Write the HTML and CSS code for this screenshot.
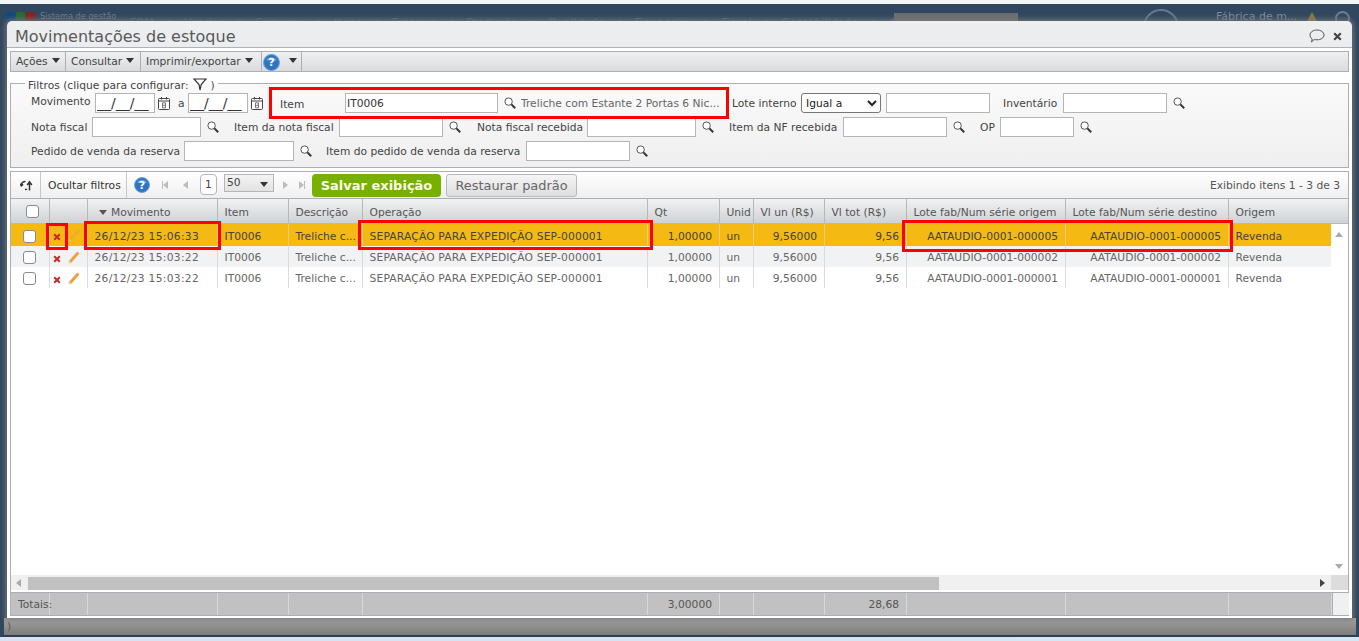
FILE: index.html
```html
<!DOCTYPE html>
<html lang="pt-BR">
<head>
<meta charset="utf-8">
<title>Movimentações de estoque</title>
<link rel="stylesheet" href="styles.css">
</head>
<body>
<svg class="defs" width="0" height="0" aria-hidden="true">
  <symbol id="lens" viewBox="0 0 12 12"><circle cx="4.6" cy="4.6" r="3.7" fill="#fff" stroke="#555" stroke-width="1"/><path d="M7.400 7.400l3.800 3.800" stroke="#333" stroke-width="2"/></symbol>
  <symbol id="cal" viewBox="0 0 12 14"><rect x=".5" y="2.500" width="11" height="11" rx="1" fill="#fff" stroke="#444"/><path d="M.5 5h11M3.500 1v2.500M8.500 1v2.500" stroke="#444"/><path d="M4.500 6.800h3v5h-3zM4.500 9.300h3" fill="none" stroke="#555" stroke-width=".8"/></symbol>
  <symbol id="help" viewBox="0 0 16 16"><circle cx="8" cy="8" r="7.500" fill="#2f74c0"/><circle cx="8" cy="8" r="7.500" fill="none" stroke="#6fa3d8"/><path d="M3 6a5.500 5 0 0 1 10 0z" fill="#6fa6dd"/></symbol>
  <symbol id="del" viewBox="0 0 8 8"><path d="M1.200 1.200l5.600 5.600M6.800 1.200L1.200 6.800" stroke="#c62a2a" stroke-width="2"/></symbol>
  <symbol id="pen" viewBox="0 0 12 13"><path d="M1.500 11.400L10.400 1.400" stroke="#ee9f45" stroke-width="3"/><path d="M.3 12.800l.7-3.200 2.300 2z" fill="#f6d9ad"/></symbol>
</svg>

<div class="desktop">
  <header class="appbar">
    <span class="dots"><i class="dot d1"></i><i class="dot d2"></i><i class="dot d3"></i></span>
    <span class="appname">Sistema de gestão</span>
    <span class="appnav">CRM ▾ Vendas ▾ Compras ▾ Itens ▾ Estoque ▾ Produção ▾ Qualidade ▾ Financeiro ▾ Fiscal ▾ Contabilidade ▾ ✱ ▾ ◯ ▾</span>
    <span class="appsearch"></span>
    <span class="applogo"></span>
    <span class="company">Fábrica de m...</span>
    <span class="bell"></span>
    <span class="power"></span>
  </header>
  <div class="desk-fill"></div>
  <div class="statusline"><span class="paren">)</span></div>
  <div class="taskstrip"></div>

  <section class="window">
    <div class="titlebar">
      <h1>Movimentações de estoque</h1>
      <span class="title-icons">
        <svg class="chat" viewBox="0 0 16 14" width="16" height="14"><path d="M8 1c3.800 0 7 2.100 7 5s-3.200 4.800-7 4.800c-1 0-1.800-.1-2.600-.4L2.500 13l.7-3C1.800 9 1 7.700 1 6c0-2.900 3.200-5 7-5z" fill="none" stroke="#555"/></svg>
        <svg class="close" viewBox="0 0 9 9" width="9" height="9"><path d="M1.200 1.200l6.600 6.600M7.800 1.200L1.200 7.800" stroke="#444" stroke-width="2.200"/></svg>
      </span>
    </div>
    <div class="winbody">
      <nav class="menubar">
        <span class="menu w-acoes">Ações <i class="caret"></i></span>
        <span class="menu w-consultar">Consultar <i class="caret"></i></span>
        <span class="menu w-imprimir">Imprimir/exportar <i class="caret"></i></span>
        <span class="menu w-help"><span class="helpicon big"><svg width="17" height="17"><use href="#help"/></svg><b>?</b></span><i class="caret"></i></span>
      </nav>

      <fieldset class="filters">
        <legend>Filtros (clique para configurar: <svg class="funnel" viewBox="0 0 14 13" width="14" height="13"><path d="M1 1h12L8.200 6.500 7 12 6 6.500z" fill="#fff" stroke="#333" stroke-width="1.200"/></svg> )</legend>
        <div class="frow r1">
          <label class="l-mov">Movimento</label><input class="in date" value="__/__/__">
          <svg class="calicon c1" width="12" height="14"><use href="#cal"/></svg>
          <label class="l-a">a</label><input class="in date" value="__/__/__">
          <svg class="calicon" width="12" height="14"><use href="#cal"/></svg>
          <label class="l-item">Item</label><input class="in i-item" value="IT0006">
          <svg class="lens" width="12" height="12"><use href="#lens"/></svg>
          <span class="itemdesc">Treliche com Estante 2 Portas 6 Nic...</span>
          <label class="l-lote">Lote interno</label>
          <select class="sel"><option>Igual a</option></select>
          <input class="in i-lote">
          <label class="l-inv">Inventário</label><input class="in i-104">
          <svg class="lens" width="12" height="12"><use href="#lens"/></svg>
        </div>
        <div class="frow r2">
          <label class="l-nf">Nota fiscal</label><input class="in i-109">
          <svg class="lens" width="12" height="12"><use href="#lens"/></svg>
          <label class="l-inf">Item da nota fiscal</label><input class="in i-104">
          <svg class="lens" width="12" height="12"><use href="#lens"/></svg>
          <label class="l-nfr">Nota fiscal recebida</label><input class="in i-109">
          <svg class="lens" width="12" height="12"><use href="#lens"/></svg>
          <label class="l-inr">Item da NF recebida</label><input class="in i-104">
          <svg class="lens" width="12" height="12"><use href="#lens"/></svg>
          <label class="l-op">OP</label><input class="in i-74">
          <svg class="lens" width="12" height="12"><use href="#lens"/></svg>
        </div>
        <div class="frow r3">
          <label class="l-ped">Pedido de venda da reserva</label><input class="in i-110">
          <svg class="lens" width="12" height="12"><use href="#lens"/></svg>
          <label class="l-ipd">Item do pedido de venda da reserva</label><input class="in i-104">
          <svg class="lens" width="12" height="12"><use href="#lens"/></svg>
        </div>
      </fieldset>

      <section class="gridpanel">
        <div class="gridbar">
          <span class="gb-cell gb-refresh"><svg viewBox="0 0 14 11" width="14" height="11"><path d="M1.200 5.500C1.500 2.800 3 1.500 5.500 1.500M.1 3.800l1.200 2 1.800-1.500M5 9.500c1 0 1.500 0 2-.3M9.500 10.500V2.500M7.200 5l2.300-3.300L11.800 5" fill="none" stroke="#333" stroke-width="1.500"/></svg></span>
          <span class="gb-cell gb-hide">Ocultar filtros</span>
          <span class="helpicon gb-help"><svg width="16" height="16"><use href="#help"/></svg><b>?</b></span>
          <span class="pager"><i class="pg first"></i><i class="pg prev"></i></span>
          <span class="pagenum">1</span>
          <span class="pagesize">50<i class="caret dark"></i></span>
          <span class="pager pager2"><i class="pg next"></i><i class="pg last"></i></span>
          <button class="btn-save">Salvar exibição</button>
          <button class="btn-reset">Restaurar padrão</button>
          <span class="showing">Exibindo itens 1 - 3 de 3</span>
        </div>

        <div class="gridmain">
          <div class="gtable">
            <div class="ghead">
              <div class="c chk"><span class="cb head-cb"></span></div>
              <div class="c"></div>
              <div class="c sorted"><i class="caret sort"></i>Movimento</div>
              <div class="c">Item</div>
              <div class="c">Descrição</div>
              <div class="c">Operação</div>
              <div class="c">Qt</div>
              <div class="c">Unid</div>
              <div class="c">Vl un (R$)</div>
              <div class="c">Vl tot (R$)</div>
              <div class="c">Lote fab/Num série origem</div>
              <div class="c">Lote fab/Num série destino</div>
              <div class="c">Origem</div>
            </div>
            <div class="grow sel-row">
              <div class="c chk"><span class="cb"></span></div>
              <div class="c ico"><svg width="8" height="8"><use href="#del"/></svg><svg class="pen" width="12" height="13"><use href="#pen"/></svg></div>
              <div class="c dt">26/12/23 15:06:33</div><div class="c">IT0006</div><div class="c">Treliche c...</div>
              <div class="c op">SEPARAÇÃO PARA EXPEDIÇÃO SEP-000001</div>
              <div class="c r">1,00000</div><div class="c">un</div><div class="c r">9,56000</div><div class="c r">9,56</div>
              <div class="c r">AATAUDIO-0001-000005</div><div class="c r">AATAUDIO-0001-000005</div><div class="c">Revenda</div>
            </div>
            <div class="grow alt">
              <div class="c chk"><span class="cb"></span></div>
              <div class="c ico"><svg width="8" height="8"><use href="#del"/></svg><svg class="pen" width="12" height="13"><use href="#pen"/></svg></div>
              <div class="c dt">26/12/23 15:03:22</div><div class="c">IT0006</div><div class="c">Treliche c...</div>
              <div class="c op">SEPARAÇÃO PARA EXPEDIÇÃO SEP-000001</div>
              <div class="c r">1,00000</div><div class="c">un</div><div class="c r">9,56000</div><div class="c r">9,56</div>
              <div class="c r">AATAUDIO-0001-000002</div><div class="c r">AATAUDIO-0001-000002</div><div class="c">Revenda</div>
            </div>
            <div class="grow">
              <div class="c chk"><span class="cb"></span></div>
              <div class="c ico"><svg width="8" height="8"><use href="#del"/></svg><svg class="pen" width="12" height="13"><use href="#pen"/></svg></div>
              <div class="c dt">26/12/23 15:03:22</div><div class="c">IT0006</div><div class="c">Treliche c...</div>
              <div class="c op">SEPARAÇÃO PARA EXPEDIÇÃO SEP-000001</div>
              <div class="c r">1,00000</div><div class="c">un</div><div class="c r">9,56000</div><div class="c r">9,56</div>
              <div class="c r">AATAUDIO-0001-000001</div><div class="c r">AATAUDIO-0001-000001</div><div class="c">Revenda</div>
            </div>
            <div class="gblank"></div>
            <div class="hscroll"><i class="arr left"></i><span class="hthumb"></span><i class="arr right"></i></div>
          </div>
          <div class="vscroll"><div class="vhead"></div><i class="arr up"></i><i class="arr down"></i><div class="vcorner"></div></div>
        </div>

        <div class="gtotals">
          <div class="c">Totais:</div><div class="c"></div><div class="c"></div><div class="c"></div><div class="c"></div><div class="c"></div>
          <div class="c r">3,00000</div><div class="c"></div><div class="c"></div><div class="c r">28,68</div><div class="c"></div><div class="c"></div><div class="c"></div><div class="tcorner"></div>
        </div>
      </section>
    </div>
  </section>

  <i class="mark m-item"></i>
  <i class="mark m-x"></i>
  <i class="mark m-mov"></i>
  <i class="mark m-op"></i>
  <i class="mark m-lote"></i>
</div>
</body>
</html>
```
FILE: styles.css
```css
* { box-sizing: border-box; }
html, body { margin: 0; height: 641px; overflow: hidden; }
body { font-family: "DejaVu Sans", sans-serif; font-size: 10.7px; color: #444; background: #fff; }
.defs { position: absolute; }
.desktop { position: relative; width: 1359px; height: 641px; display: flex; flex-direction: column; padding-top: 4px; background: #f4f5f5; overflow: hidden; }

.appbar { height: 18px; background: #30475f; display: flex; align-items: flex-start; padding-left: 6px; flex: none; color: #6c7a89; white-space: nowrap; }
.dots { display: flex; gap: 1px; width: 29px; flex: none; }
.dot { width: 9px; height: 8px; border-radius: 2px; display: block; margin-top: 8px; }
.d1 { background: #0f4a80; } .d2 { background: #2a6a30; } .d3 { background: #8c2020; }
.appname { margin: 7px 0 0 5px; width: 75px; flex: none; font-size: 8.2px; }
.appnav { margin: 12px 0 0 14px; width: 765px; flex: none; font-size: 11px; color: #4f6073; word-spacing: 9px; }
.appsearch { width: 124px; height: 10px; background: #6b6d70; margin-top: 9px; flex: none; }
.applogo { width: 36px; height: 36px; border: 2px solid #66788a; border-radius: 50%; margin: 5px 0 0 125px; flex: none; }
.company { margin: 6px 0 0 37px; width: 79px; flex: none; font-size: 11px; color: #7d8a98; }
.bell { width: 0; height: 0; border: 5px solid transparent; border-bottom: 9px solid #8a7a3a; margin: 3px 0 0 12px; flex: none; }
.power { width: 15px; height: 15px; border: 2px solid #6f7d8c; border-radius: 50%; margin: 7px 0 0 18px; flex: none; }
.desk-fill { flex: 1; background: #30475f; }
.statusline { flex: none; height: 19px; background: linear-gradient(#a3a3a3, #7c7c7c); border-left: 4px solid #30475f; border-right: 3px solid #30475f; border-bottom: 2px solid #303f4f; }
.taskstrip { height: 4px; flex: none; background: linear-gradient(90deg, #d9e2f0, #d3e8f2); }
.paren { font-size: 11px; color: #6a5a3a; margin-left: 3px; line-height: 12px; padding-top: 3px; display: block; }

.window { position: absolute; left: 7px; top: 21px; width: 1345px; height: 597px; border-radius: 5px 5px 0 0; background: linear-gradient(#eceef0, #cfd2d5); display: flex; flex-direction: column; box-shadow: 0 0 5px 2px rgba(120,120,120,.85); }
.titlebar { height: 26px; flex: none; display: flex; align-items: center; justify-content: space-between; padding: 4px 10px 0 8px; }
.titlebar h1 { margin: 0; font-weight: 400; font-size: 16px; color: #5a5a5a; }
.title-icons { display: flex; align-items: center; gap: 8px; }
.winbody { flex: 1; background: #fff; padding: 3px 3px 2px; display: flex; flex-direction: column; border-top: 1px solid #aeb2b6; min-height: 0; }

.menubar { height: 21px; flex: none; display: flex; background: linear-gradient(#eef0f1, #d9dbdd); border: 1px solid #aab0b5; }
.menu { display: flex; align-items: center; padding-left: 5px; border-right: 1px solid #aab0b5; white-space: nowrap; }
.w-acoes { width: 55px; } .w-consultar { width: 75px; } .w-imprimir { width: 121px; } .w-help { width: 40px; padding-left: 1px; gap: 5px; }
.caret { display: inline-block; width: 0; height: 0; border: 4px solid transparent; border-top: 5px solid #333; border-bottom: 0; margin-left: 4px; margin-top: -3px; }

.helpicon { position: relative; display: inline-flex; width: 17px; height: 17px; align-items: center; justify-content: center; flex: none; }
.helpicon svg { position: absolute; left: 0; top: 0; }
.helpicon b { position: relative; color: #fff; font-size: 11px; line-height: 1; }
.w-help .helpicon { margin-top: 2px; }

.filters { margin: 6px 0 0; padding: 0 0 0 20px; height: 90px; flex: none; border: 1px solid #aab0b5; background: linear-gradient(#fafafa, #efefef); min-width: 0; }
.filters legend { margin-left: -6px; padding: 0 3px; line-height: 11px; height: 11px; white-space: nowrap; }
.funnel { vertical-align: -2px; margin-left: 1px; }
.frow { display: flex; align-items: center; height: 20px; white-space: nowrap; }
.r1 { margin-top: 4px; }
.r2, .r3 { margin-top: 4px; }
.frow label { flex: none; }
.in { height: 20px; border: 1px solid #b5b5b5; background: #fff; font: 10.7px/17px "DejaVu Sans", sans-serif; color: #333; padding: 0 1px; flex: none; outline: 0; }
.in.date { width: 60px; font-size: 14px; line-height: 18px; padding: 0 1px; }
.i-item { width: 153px; }
.i-lote, .i-104 { width: 104px; }
.i-109 { width: 109px; }
.i-110 { width: 110px; }
.i-74 { width: 74px; }
.calicon { margin: 0 17px 0 3px; flex: none; }
.c1 { margin-right: 8px; }
.lens { margin-left: 6px; flex: none; }
.l-mov { width: 64px; margin-top: -3px; }
.l-a { width: 10px; }
.l-item { width: 65px; margin-top: 3px; }
.itemdesc { width: 199px; margin-left: 5px; overflow: hidden; color: #666; }
.l-lote { width: 69px; margin-left: 12px; }
.sel { width: 80px; height: 20px; font: 10.7px "DejaVu Sans", sans-serif; background: #fff; border: 1px solid #777; border-radius: 3px; color: #222; flex: none; padding: 0; }
.i-lote { margin-left: 5px; }
.l-inv { width: 60px; margin-left: 13px; }
.l-nf { width: 61px; }
.l-inf { width: 105px; margin-left: 15px; }
.l-nfr { width: 110px; margin-left: 16px; }
.l-inr { width: 114px; margin-left: 15px; }
.l-op { width: 20px; margin-left: 15px; }
.l-ped { width: 153px; }
.l-ipd { width: 200px; margin-left: 14px; }

.gridpanel { flex: 1; display: flex; flex-direction: column; margin-top: 3px; border: 1px solid #aab0b5; border-bottom: 0; min-height: 0; }
.gridbar { height: 27px; flex: none; display: flex; align-items: center; background: linear-gradient(#fff, #efefef); border-bottom: 1px solid #aab0b5; }
.gb-cell { height: 26px; display: flex; align-items: center; border-right: 1px solid #c6c9cc; flex: none; }
.gb-refresh { width: 30px; justify-content: center; padding-left: 2px; }
.gb-hide { width: 86px; padding-left: 7px; color: #333; white-space: nowrap; }
.gb-help { width: 16px; height: 16px; margin-left: 7px; }
.pager { display: flex; gap: 15px; margin-left: 13px; flex: none; }
.pg { width: 0; height: 0; border: 4px solid transparent; border-left: 0; border-right: 5px solid #bcbcbc; position: relative; display: block; }
.next, .last { border-right: 0; border-left: 5px solid #bcbcbc; }
.first::before, .last::after { content: ""; position: absolute; top: -4px; width: 1px; height: 8px; background: #bcbcbc; }
.first::before { left: -1px; }
.last::after { left: 0; }
.pagenum { width: 17px; height: 21px; border: 1px solid #b5b5b5; border-radius: 4px; background: #fff; margin: -2px 0 0 12px; display: flex; align-items: center; justify-content: center; flex: none; }
.pagesize { width: 50px; height: 18px; margin: -5px 0 0 7px; border: 1px solid #b5b5b5; background: linear-gradient(#f4f4f4, #e2e2e2); padding: 0 5px 0 2px; display: flex; justify-content: space-between; align-items: center; flex: none; }
.dark { margin: 3px 0 0; }
.pager2 { margin-left: 9px; gap: 11px; }
.btn-save { margin-left: 8px; width: 129px; height: 23px; border: 0; border-radius: 4px; background: #78b000; color: #fbfbe8; font: 700 13px "DejaVu Sans", sans-serif; padding: 0; flex: none; }
.btn-reset { margin-left: 5px; width: 131px; height: 23px; border: 1px solid #b8b8b8; border-radius: 3px; background: linear-gradient(#f5f5f5, #dedede); color: #666; font: 12.9px "DejaVu Sans", sans-serif; padding: 0; flex: none; }
.showing { margin-left: auto; margin-right: 8px; color: #555; }

.gridmain { flex: 1; display: flex; min-height: 0; }
.gtable { flex: 1; display: flex; flex-direction: column; min-width: 0; }
.ghead, .grow, .gtotals { display: grid; grid-template-columns: 39px 38px 130px 71px 74px 285px 72px 34px 71px 82px 159px 163px 103px; }
.ghead { height: 25px; flex: none; background: linear-gradient(#f1f2f3, #cfd2d5); border-bottom: 1px solid #b5babf; }
.ghead .c { border-right: 1px solid #b4b9be; display: flex; align-items: center; padding: 2px 0 0 6.5px; color: #555; white-space: nowrap; overflow: hidden; }
.ghead .chk { padding: 0 0 0 5px; }
.ghead .sorted { padding-left: 11px; }
.sort { margin: 1px 4px 0 0; border-top-color: #555; }
.chk { justify-content: center; }
.cb { width: 13px; height: 13px; border: 1px solid #8a8a8a; border-radius: 3px; background: #fff; display: block; }
.grow { flex: none; height: 21px; background: #fff; color: #666; }
.grow .c { border-right: 1px solid #d9dbdd; display: flex; align-items: center; padding: 2px 7px 0 6.5px; white-space: nowrap; overflow: hidden; }
.grow .chk { padding: 2px 1px 0 0; }
.grow .dt { letter-spacing: .3px; }
.grow .op { letter-spacing: .17px; }
.c.r { justify-content: flex-end; }
.alt { background: #f1f2f3; }
.sel-row { height: 22px; background: #f5b914; color: #444; }
.sel-row .c { border-right-color: #e9cd7c; }
.grow .ico { padding: 1px 0 0 3px; gap: 7px; }
.ico svg:first-child { margin-top: 3px; }
.sel-row .pen { opacity: .45; }
.gblank { flex: 1; }
.hscroll { height: 17px; flex: none; background: #f0f0f0; position: relative; border-bottom: 2px solid #fff; }
.hthumb { position: absolute; left: 17px; top: 2px; width: 911px; height: 13px; background: #c1c1c1; }
.arr { position: absolute; width: 0; height: 0; border: 4px solid transparent; }
.left { left: 5px; top: 4px; border-left: 0; border-right: 5px solid #aaa; }
.right { right: 6px; top: 4px; border-right: 0; border-left: 5px solid #444; }
.vscroll { width: 17px; flex: none; position: relative; background: #fff; display: flex; flex-direction: column; }
.vhead { height: 25px; background: linear-gradient(#f1f2f3, #cfd2d5); border-bottom: 1px solid #b5babf; }
.vcorner { margin-top: auto; height: 17px; background: #dcdcdc; border-bottom: 2px solid #fff; }
.up { top: 33px; left: 4px; border-top: 0; border-bottom: 5px solid #aaa; }
.down { bottom: 23px; left: 4px; border-bottom: 0; border-top: 5px solid #aaa; }

.gtotals { height: 24px; flex: none; background: #c1c1c1; border-top: 1px solid #a9afb5; border-bottom: 1px solid #a9afb5; grid-template-columns: 39px 38px 130px 71px 74px 285px 72px 34px 71px 82px 159px 163px 103px 17px; }
.gtotals .c { border-right: 1px solid #d8d8d8; display: flex; align-items: center; padding: 0 7px; color: #555; white-space: nowrap; }
.tcorner { background: #eef0f2; border-left: 1px solid #a9afb5; }

.mark { position: absolute; border: 3px solid #f00; display: block; }
.m-item { left: 269px; top: 87px; width: 460px; height: 32px; }
.m-x { left: 46px; top: 223px; width: 22px; height: 27px; }
.m-mov { left: 84px; top: 221px; width: 137px; height: 29px; }
.m-op { left: 358px; top: 220px; width: 295px; height: 30px; }
.m-lote { left: 902px; top: 220px; width: 331px; height: 32px; }
```
